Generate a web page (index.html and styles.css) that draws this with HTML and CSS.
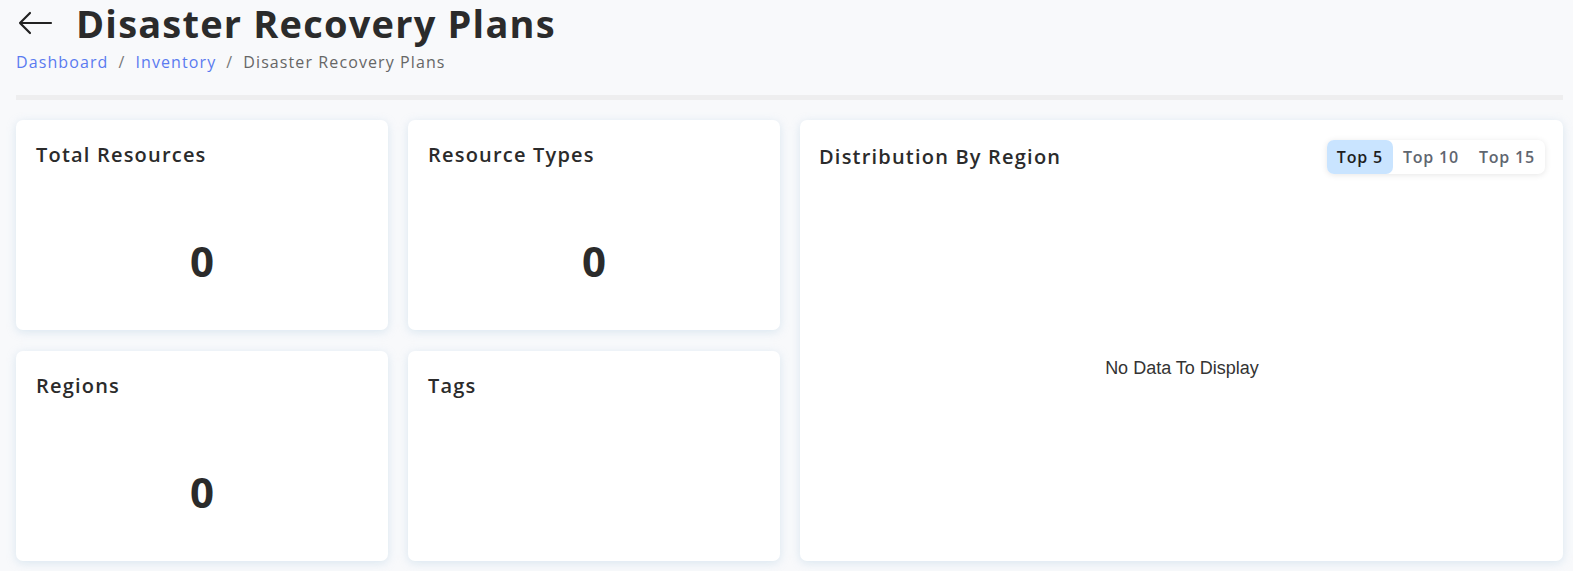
FILE: index.html
```html
<!DOCTYPE html>
<html>
<head>
<meta charset="utf-8">
<link rel="stylesheet" href="styles.css">
</head>
<body>
<div class="page">
  <header class="head">
    <div class="title-row">
      <svg class="back" width="36" height="24" viewBox="0 0 36 24"><path d="M34 12H3M13 2L3 12l10 10" fill="none" stroke="#222" stroke-width="2.2" stroke-linecap="round" stroke-linejoin="round"/></svg>
      <h1 class="title">Disaster Recovery Plans</h1>
    </div>
    <nav class="crumbs">
      <a class="crumb-link">Dashboard</a><span class="sep">/</span><a class="crumb-link">Inventory</a><span class="sep">/</span><span class="crumb-cur">Disaster Recovery Plans</span>
    </nav>
  </header>
  <div class="divider"></div>
  <main class="grid">
    <section class="card stat">
      <h2 class="card-title">Total Resources</h2>
      <div class="value">0</div>
    </section>
    <section class="card stat">
      <h2 class="card-title">Resource Types</h2>
      <div class="value">0</div>
    </section>
    <section class="card big">
      <div class="big-head">
        <h2 class="card-title">Distribution By Region</h2>
        <div class="toggle">
          <span class="tg active">Top 5</span><span class="tg">Top 10</span><span class="tg">Top 15</span>
        </div>
      </div>
      <div class="empty">No Data To Display</div>
    </section>
    <section class="card stat">
      <h2 class="card-title">Regions</h2>
      <div class="value">0</div>
    </section>
    <section class="card stat">
      <h2 class="card-title">Tags</h2>
      <div class="value"></div>
    </section>
  </main>
</div>
</body>
</html>
```
FILE: styles.css
```css
* { box-sizing: border-box; }
html, body { margin: 0; padding: 0; }
body {
  background: #f8f9fb;
  font-family: "Open Sans", "Noto Sans", sans-serif;
  color: #2b2b2b;
  height: 571px;
  overflow: hidden;
}
.page { padding: 0 10px 0 16px; }
.head { padding-top: 2px; }
.title-row { display: flex; align-items: center; height: 42px; }
.back { margin-left: 1px; margin-right: 23px; }
.title {
  margin: 0;
  font-size: 38px;
  font-weight: 700;
  color: #2b2b2b;
  letter-spacing: 1.2px;
  line-height: 42px;
}
.crumbs {
  margin-top: 6px;
  font-size: 16px;
  line-height: 24px;
  letter-spacing: 1.1px;
  display: flex;
  align-items: center;
}
.crumb-link { color: #5b7bf0; }
.sep { color: #777; margin: 0 10px; }
.crumb-cur { color: #666; }
.divider {
  margin-top: 21px;
  height: 5px;
  background: #eeeeef;
}
.grid {
  margin-top: 20px;
  display: grid;
  grid-template-columns: 372fr 372fr 763fr;
  grid-template-rows: 210px 210px;
  column-gap: 20px;
  row-gap: 21px;
}
.card {
  background: #fff;
  border-radius: 7px;
  box-shadow: 0 2px 10px rgba(160, 195, 220, 0.35);
}
.stat { padding: 22px 20px; display: flex; flex-direction: column; }
.card-title {
  margin: 0;
  font-size: 20px;
  font-weight: 600;
  color: #2b2b2b;
  letter-spacing: 1.2px;
  line-height: 26px;
}
.value {
  margin-top: 72px;
  text-align: center;
  font-size: 42px;
  font-weight: 700;
  line-height: 42px;
  color: #2b2b2b;
}
.big { grid-row: 1 / span 2; grid-column: 3; padding: 19px 18px 0 19px; display: flex; flex-direction: column; }
.big-head { display: flex; justify-content: space-between; align-items: center; height: 36px; }
.toggle {
  display: flex;
  background: #fff;
  border-radius: 7px;
  box-shadow: 0 1px 6px rgba(0, 0, 0, 0.10);
  height: 34px;
  align-items: center;
}
.tg {
  font-size: 16px;
  font-weight: 600;
  color: #5f6670;
  letter-spacing: 0.8px;
  padding: 0 10px;
  line-height: 34px;
  height: 34px;
}
.active { background: #c9e4ff; color: #1e1e1e; border-radius: 7px; }
.empty {
  flex: 1;
  display: flex;
  align-items: center;
  justify-content: center;
  font-family: "Liberation Sans", Arial, sans-serif;
  font-size: 18px;
  color: #333;
}
```
